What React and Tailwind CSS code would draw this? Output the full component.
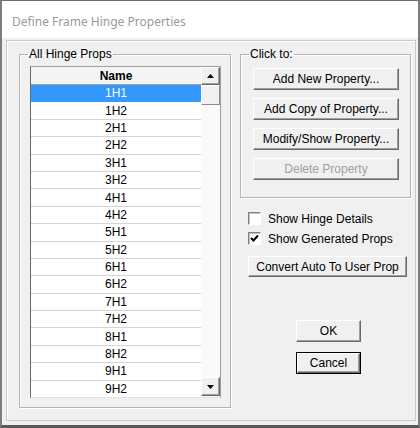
import React from "react";

const rows = ["1H1", "1H2", "2H1", "2H2", "3H1", "3H2", "4H1", "4H2", "5H1", "5H2", "6H1", "6H2", "7H1", "7H2", "8H1", "8H2", "9H1", "9H2"];

const btn =
  "flex items-center justify-center bg-[#f0f0f0] border border-t-white border-l-white border-r-[#696969] border-b-[#696969] shadow-[inset_-1px_-1px_0_#a0a0a0] text-[12px] leading-none";

function Arrow({ down }) {
  return (
    <svg width="7" height="4" viewBox="0 0 7 4">
      {down ? <polygon points="0,0 7,0 3.5,4" fill="#000" /> : <polygon points="0,4 7,4 3.5,0" fill="#000" />}
    </svg>
  );
}

function Checkbox({ checked, label }) {
  return (
    <div className="flex items-center h-[13px]">
      <div className="w-[13px] h-[13px] bg-white border border-t-[#808080] border-l-[#808080] border-r-white border-b-white shadow-[inset_1px_1px_0_#c4c4c4] flex items-center justify-center">
        {checked && (
          <svg width="9" height="9" viewBox="0 0 9 9">
            <polyline points="1,4 3.5,6.5 8,1.5" fill="none" stroke="#000" strokeWidth="2" />
          </svg>
        )}
      </div>
      <span className="ml-[7px] text-[12px] leading-none">{label}</span>
    </div>
  );
}

export default function App() {
  return (
    <div className="w-[420px] h-[428px] flex flex-col bg-[#f0f0f0] border-t border-t-[#6a6a6a] border-x-2 border-x-[#7d7d7d] border-b-[3px] border-b-[#595959] font-['Liberation_Sans',Arial,sans-serif] text-black overflow-hidden">
      {/* title bar */}
      <div className="h-[37px] bg-white pl-[10px] pt-[8px]">
        <span className="text-[12px] leading-[16px] text-[#9a9a9a] font-['Noto_Sans',sans-serif]">
          Define Frame Hinge Properties
        </span>
      </div>

      <div className="flex-1 pt-[2px] pl-[4px] pr-[2px] pb-[4px]">
        <div className="h-full border border-[#cacaca] shadow-[inset_1px_1px_0_#ffffff] flex pl-[12px] pt-[6px]">
          {/* All Hinge Props */}
          <fieldset className="w-[212px] h-[361px] border border-[#b4b4b4] shadow-[inset_1px_1px_0_#ffffff,1px_1px_0_#ffffff]">
            <legend className="ml-[8px] px-[1px] text-[12px] leading-[14px]">All Hinge Props</legend>
            <div className="pl-[10px] pt-[5px]">
              <div className="w-[191px] h-[332px] border border-t-[#a0a0a0] border-l-[#696969] border-r-[#a0a0a0] border-b-[#e3e3e3] bg-white flex overflow-hidden">
                <div className="w-[170px] flex flex-col">
                  <div className="h-[18px] shrink-0 bg-[#f4f4f4] border-b border-b-[#a0a0a0] flex items-center justify-center text-[12px] font-bold leading-none">
                    Name
                  </div>
                  {rows.map((r, i) => (
                    <div
                      key={r}
                      className={`h-[17.4px] shrink-0 flex items-center justify-center text-[12px] leading-none border-b ${
                        i === 0 ? "bg-[#3399ff] text-white border-b-[#3399ff]" : "bg-white border-b-[#d4d4d4]"
                      }`}
                    >
                      {r}
                    </div>
                  ))}
                </div>
                <div className="w-[19px] flex flex-col bg-[#f7f7f7]">
                  <div className={`${btn} h-[18px] shrink-0`}>
                    <Arrow />
                  </div>
                  <div className="h-[20px] shrink-0 bg-[#f0f0f0] border border-t-white border-l-white border-r-[#8a8a8a] border-b-[#8a8a8a]" />
                  <div className="flex-1 bg-[#fafafa]" />
                  <div className={`${btn} h-[19px] shrink-0 mb-[1px]`}>
                    <Arrow down />
                  </div>
                </div>
              </div>
            </div>
          </fieldset>

          {/* right column */}
          <div className="ml-[9px] flex flex-col">
            <fieldset className="w-[171px] h-[151px] border border-[#b4b4b4] shadow-[inset_1px_1px_0_#ffffff,1px_1px_0_#ffffff]">
              <legend className="ml-[8px] px-[1px] text-[12px] leading-[14px]">Click to:</legend>
              <div className="pl-[12px] pt-[7px] flex flex-col gap-[8px]">
                <div className={`${btn} w-[146px] h-[22px]`}>Add New Property...</div>
                <div className={`${btn} w-[146px] h-[22px]`}>Add Copy of Property...</div>
                <div className={`${btn} w-[146px] h-[22px]`}>Modify/Show Property...</div>
                <div className={`${btn} w-[146px] h-[22px] text-[#a0a0a0]`}>Delete Property</div>
              </div>
            </fieldset>

            <div className="pl-[8px] mt-[14px] flex flex-col gap-[7px]">
              <Checkbox label="Show Hinge Details" />
              <Checkbox checked label="Show Generated Props" />
            </div>

            <div className={`${btn} ml-[8px] mt-[11px] w-[159px] h-[21px]`}>Convert Auto To User Prop</div>

            <div className="ml-[56px] mt-[43px] flex flex-col gap-[10px]">
              <div className={`${btn} w-[65px] h-[22px]`}>OK</div>
              <div className="w-[65px] h-[22px] border border-black">
                <div className={`${btn} w-full h-full`}>Cancel</div>
              </div>
            </div>
          </div>
        </div>
      </div>
    </div>
  );
}
